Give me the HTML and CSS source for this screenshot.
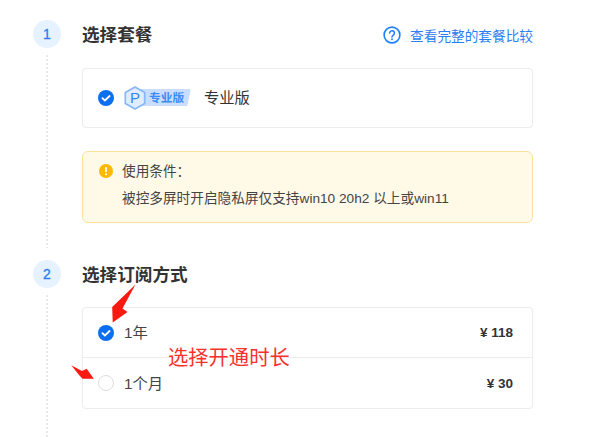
FILE: index.html
```html
<!DOCTYPE html>
<html lang="zh-CN">
<head>
<meta charset="utf-8">
<title>选择套餐</title>
<link rel="stylesheet" href="styles.css">
</head>
<body>
<main class="page">
  <section class="step step-first">
    <div class="rail"><span class="badge">1</span><span class="dots"></span></div>
    <div class="content">
      <header class="head">
        <h2 class="title">选择套餐</h2>
        <a class="link">
          <svg class="help" viewBox="0 0 18 18" width="18" height="18"><circle cx="9" cy="9" r="7.9" fill="none" stroke="#1f7fff" stroke-width="1.6"/><path d="M6.6 7.100a2.400 2.400 0 1 1 3.700 2c-.9.6-1.300 1-1.300 2" fill="none" stroke="#1f7fff" stroke-width="1.500" stroke-linecap="round"/><circle cx="9" cy="13.200" r=".95" fill="#1f7fff"/></svg>
          <span>查看完整的套餐比较</span>
        </a>
      </header>
      <div class="card plan">
        <svg class="check" viewBox="0 0 16 16" width="16" height="16"><circle cx="8" cy="8" r="8" fill="#0b6ff2"/><path d="M4.400 8.200l2.500 2.300 4.700-4.500" fill="none" stroke="#fff" stroke-width="1.800" stroke-linecap="round" stroke-linejoin="round"/></svg>
        <span class="tag">
          <svg class="tag-bg" viewBox="0 0 67 24" width="67" height="24"><path d="M11 3H65a1.500 1.500 0 0 1 1.500 1.800L63.500 19a1.500 1.500 0 0 1-1.500 1H11z" fill="#c9deff"/><path d="M11 1l9.700 5.500v11L11 23 1.300 17.500v-11z" fill="#e0edff" stroke="#86b8fc" stroke-width="1.700" stroke-linejoin="round"/></svg>
          <span class="tag-p">P</span>
          <span class="tag-text">专业版</span>
        </span>
        <span class="plan-name">专业版</span>
      </div>
      <div class="notice">
        <div class="notice-head">
          <svg class="notice-icon" viewBox="0 0 14 14" width="14" height="14"><circle cx="7" cy="7" r="7" fill="#fdb900"/><rect x="6.100" y="3" width="1.800" height="5.200" rx=".9" fill="#fff"/><circle cx="7" cy="10.200" r="1" fill="#fff"/></svg>
          <span>使用条件：</span>
        </div>
        <p class="notice-body">被控多屏时开启隐私屏仅支持win10 20h2 以上或win11</p>
      </div>
    </div>
  </section>

  <section class="step">
    <div class="rail"><span class="badge">2</span><span class="dots"></span></div>
    <div class="content">
      <header class="head"><h2 class="title">选择订阅方式</h2></header>
      <div class="card options">
        <div class="option option-year">
          <svg class="check" viewBox="0 0 16 16" width="16" height="16"><circle cx="8" cy="8" r="8" fill="#0b6ff2"/><path d="M4.400 8.200l2.500 2.300 4.700-4.500" fill="none" stroke="#fff" stroke-width="1.800" stroke-linecap="round" stroke-linejoin="round"/></svg>
          <span class="option-name">1年</span>
          <span class="price">¥ 118</span>
        </div>
        <div class="option option-month">
          <span class="radio"></span>
          <span class="option-name">1个月</span>
          <span class="price">¥ 30</span>
        </div>
      </div>
    </div>
  </section>

  <svg class="arrow arrow-a" viewBox="0 0 30 40" width="30" height="40"><path d="M26.500.5L13.500 24.500 18.500 28 3.700 38.500 3.200 23z" fill="#fb1a12"/></svg>
  <svg class="arrow arrow-b" viewBox="0 0 24 16" width="24" height="16"><path d="M.2.200L11 6 15.700 3.800 22.800 13.800 11.500 13.800 8.500 10.500z" fill="#fb1a12"/></svg>
  <span class="note">选择开通时长</span>
</main>
</body>
</html>
```
FILE: styles.css
```css
* { box-sizing: border-box; }
html, body { margin: 0; background: #fff; }
body { width: 600px; height: 437px; overflow: hidden; font-family: "Liberation Sans", "Noto Sans CJK SC", sans-serif; color: #333; }
.page { position: relative; height: 437px; padding: 20px 67px 0 33px; display: flex; flex-direction: column; gap: 12px; }
.step { display: flex; gap: 21px; }
.step-first { height: 228px; }
.step:last-of-type { flex: 1; }
.rail { width: 28px; display: flex; flex-direction: column; align-items: center; flex: none; }
.badge { width: 28px; height: 28px; border-radius: 50%; background: #e6f2ff; color: #2a7ff2; font-size: 14px; line-height: 28px; text-align: center; -webkit-text-stroke: .3px #2a7ff2; }
.dots { flex: 1; width: 2px; margin-top: 7px; background: repeating-linear-gradient(180deg, #e9e9e9 0 2px, transparent 2px 4px); }
.content { flex: 1; min-width: 0; }
.head { height: 28px; display: flex; align-items: center; justify-content: space-between; }
.title { margin: 0 0 2px; font-size: 17.600px; font-weight: 700; color: #333; }
.link { display: flex; align-items: center; gap: 9px; margin-top: 2px; font-size: 13.670px; color: #2a80f2; }
.help { flex: none; }
.card { border: 1px solid #ececec; border-radius: 4px; background: #fff; box-shadow: 0 0 1px rgba(0, 0, 0, .04); }
.plan { margin-top: 20px; height: 60px; display: flex; align-items: center; padding-left: 15px; }
.check { flex: none; }
.tag { position: relative; margin-left: 10px; width: 67px; height: 24px; flex: none; }
.tag-bg { display: block; }
.tag-p { position: absolute; left: 0; top: 0; width: 22px; text-align: center; font-size: 15px; line-height: 24px; color: #2d85f5; }
.tag-text { position: absolute; left: 25px; top: 0; font-size: 11.700px; line-height: 23px; font-weight: 700; color: #3d8bf5; white-space: nowrap; }
.plan-name { margin: 0 0 4px 13px; font-size: 15.300px; color: #333; }
.notice { margin-top: 23px; height: 72px; padding: 10px 16px; background: #fff9e8; border: 1px solid #fce39b; border-radius: 6px; font-size: 13.670px; color: #444; }
.notice-head { display: flex; align-items: center; gap: 9px; height: 16px; }
.notice-icon { margin-top: 2px; flex: none; }
.notice-body { margin: 12px 0 0 23px; line-height: 18px; white-space: nowrap; }
.options { margin-top: 19px; }
.option { display: flex; align-items: center; padding: 0 19px 0 15px; }
.option-year { height: 49px; }
.option-month { height: 51px; border-top: 1px solid #ececec; }
.option-name { margin: 0 0 3px 10px; font-size: 15.300px; color: #444; }
.price { margin-left: auto; font-size: 13.500px; font-weight: 700; color: #333; }
.radio { width: 16px; height: 16px; border: 1px solid #dedede; border-radius: 50%; flex: none; }
.arrow { position: absolute; }
.arrow-a { left: 109px; top: 284px; }
.arrow-b { left: 71px; top: 365px; }
.note { position: absolute; left: 168px; top: 341px; font-size: 20.300px; color: #f8312b; }
```
